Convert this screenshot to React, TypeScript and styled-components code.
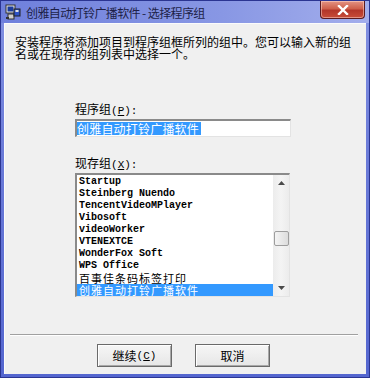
import React from 'react';
import styled, { createGlobalStyle } from 'styled-components';

const GlobalStyle = createGlobalStyle`
  html, body {
    margin: 0;
    padding: 0;
    background: #f0f0f0;
  }
  * { box-sizing: border-box; }
`;

const cjk = `"Noto Sans CJK SC", "DejaVu Sans", sans-serif`;

const Window = styled.div`
  width: 370px;
  height: 378px;
  display: flex;
  flex-direction: column;
  background: linear-gradient(to bottom, #8392e2 0%, #6b7bd8 40%, #5466cf 100%);
  border: 1px solid #2b3592;
  padding: 0 3px 3px 3px;
  font-family: ${cjk};
`;

const TitleBar = styled.div`
  height: 22px;
  display: flex;
  align-items: center;
  gap: 5px;
  margin: 0 -3px;
  padding: 0 4px;
  background: linear-gradient(to right, #6f80dc 0%, #8897e4 60%, #a3aeec 100%);
`;

const TitleText = styled.span`
  font-size: 12px;
  color: #1d1f48;
  flex: 1;
  letter-spacing: -0.6px;
`;

const CloseButton = styled.div`
  width: 45px;
  height: 18px;
  margin-top: -4px;
  border: 1px solid #5b1a20;
  border-top: none;
  border-radius: 0 0 4px 4px;
  background: linear-gradient(to bottom, #e39484 0%, #cf604b 45%, #b3362a 55%, #c84c39 100%);
  display: flex;
  align-items: center;
  justify-content: center;
  box-shadow: inset 0 0 0 1px rgba(255, 220, 210, 0.5);
`;

const Client = styled.div`
  flex: 1;
  background: #f0f0f0;
  border-top: 1px solid #fbfbfb;
  border-left: 1px solid #fbfbfb;
  display: flex;
  flex-direction: column;
`;

const Intro = styled.div`
  padding: 12px 0 0 10px;
  width: 350px;
  font-size: 12px;
  line-height: 12px;
  color: #000;
`;

const Group = styled.div`
  padding-left: 70px;
  display: flex;
  flex-direction: column;
`;

const Label = styled.div<{ $top: number }>`
  margin-top: ${p => p.$top}px;
  height: 12px;
  display: flex;
  align-items: baseline;
  font-size: 12px;
  line-height: 12px;
  color: #000;
  u { text-decoration: underline; }
`;

const Latin = styled.span`
  font-family: "Liberation Mono", monospace;
  font-size: 11px;
  line-height: 12px;
`;

const TextInput = styled.div`
  margin-top: 4px;
  width: 216px;
  height: 18px;
  background: #fff;
  border-top: 2px solid #8a8a8a;
  border-left: 2px solid #8a8a8a;
  border-right: 1px solid #e3e3e3;
  border-bottom: 1px solid #e3e3e3;
  padding: 1px 0 0 0;
  display: flex;
`;

const Selected = styled.span`
  background: #3399ff;
  color: #fff;
  font-size: 12px;
  line-height: 13px;
  height: 13px;
  padding-right: 2px;
  letter-spacing: 0.2px;
`;

const ListBox = styled.div`
  margin-top: 4px;
  width: 215px;
  height: 124px;
  background: #fff;
  border-top: 2px solid #8a8a8a;
  border-left: 2px solid #8a8a8a;
  border-right: 1px solid #e3e3e3;
  border-bottom: 1px solid #e3e3e3;
  display: flex;
`;

const Items = styled.div`
  flex: 1;
  display: flex;
  flex-direction: column;
  padding-top: 1px;
`;

const Item = styled.div<{ $sel?: boolean; $cjk?: boolean }>`
  height: 12px;
  line-height: 12px;
  padding-left: 2px;
  white-space: nowrap;
  font-family: ${p => (p.$cjk ? cjk : `"Liberation Mono", monospace`)};
  font-size: ${p => (p.$cjk ? 11 : 10)}px;
  letter-spacing: ${p => (p.$cjk ? 1 : 0)}px;
  font-weight: ${p => (p.$cjk ? 400 : 700)};
  color: ${p => (p.$sel ? '#fff' : '#000')};
  background: ${p => (p.$sel ? '#3399ff' : 'transparent')};
`;

const ScrollBar = styled.div`
  width: 16px;
  background: linear-gradient(to right, #ececec, #f4f4f4, #ececec);
  display: flex;
  flex-direction: column;
  align-items: center;
`;

const Arrow = styled.div`
  height: 16px;
  width: 16px;
  display: flex;
  align-items: center;
  justify-content: center;
`;

const Track = styled.div`
  flex: 1;
  width: 100%;
  padding-top: 40px;
`;

const Thumb = styled.div`
  height: 15px;
  width: 15px;
  margin-left: 1px;
  border: 1px solid #9d9d9d;
  border-radius: 2px;
  background: linear-gradient(to right, #f4f4f4, #dcdcdc);
`;

const Separator = styled.div`
  margin: 37px 8px 0 5px;
  height: 2px;
  border-top: 1px solid #a0a0a0;
  border-bottom: 1px solid #ffffff;
`;

const Footer = styled.div`
  display: flex;
  gap: 23px;
  padding: 8px 0 0 92px;
`;

const Button = styled.div`
  width: 75px;
  height: 23px;
  border: 1px solid #6a6a6a;
  background: linear-gradient(to bottom, #f6f6f6, #e6e6e6);
  box-shadow: inset 1px 1px 0 #ffffff, inset -1px -1px 0 #a8a8a8;
  display: flex;
  align-items: center;
  justify-content: center;
  font-size: 12px;
  line-height: 12px;
  color: #000;
`;

function SetupIcon() {
  return (
    <svg width="16" height="16" viewBox="0 0 16 16">
      <rect x="1" y="1" width="9" height="8" fill="#e8e8e8" stroke="#303030" strokeWidth="1" />
      <rect x="2.5" y="2.5" width="6" height="5" fill="#1c3c9c" />
      <rect x="3" y="10" width="6" height="5" fill="#d0d0d0" stroke="#303030" strokeWidth="1" />
      <rect x="9" y="5" width="6" height="7" fill="#2c52c8" stroke="#202020" strokeWidth="1" />
      <rect x="10.5" y="6" width="3" height="2" fill="#e0e0e0" />
      <rect x="1" y="13" width="3" height="2" fill="#303030" />
    </svg>
  );
}

function CloseGlyph() {
  return (
    <svg width="12" height="10" viewBox="0 0 12 10">
      <path d="M2 1 L10 9 M10 1 L2 9" stroke="#ffffff" strokeWidth="2.4" strokeLinecap="square" />
    </svg>
  );
}

function Tri({ up }: { up?: boolean }) {
  return (
    <svg width="7" height="4" viewBox="0 0 7 4">
      <path d={up ? 'M0 4 L3.5 0 L7 4 Z' : 'M0 0 L3.5 4 L7 0 Z'} fill="#4a4a4a" />
    </svg>
  );
}

const groups = [
  'Startup',
  'Steinberg Nuendo',
  'TencentVideoMPlayer',
  'Vibosoft',
  'videoWorker',
  'VTENEXTCE',
  'WonderFox Soft',
  'WPS Office',
];

export default function App() {
  return (
    <>
      <GlobalStyle />
      <Window>
        <TitleBar>
          <SetupIcon />
          <TitleText>创雅自动打铃广播软件 - 选择程序组</TitleText>
          <CloseButton>
            <CloseGlyph />
          </CloseButton>
        </TitleBar>
        <Client>
          <Intro>安装程序将添加项目到程序组框所列的组中。您可以输入新的组名或在现存的组列表中选择一个。</Intro>
          <Group>
            <Label $top={43}>
              程序组<Latin>(<u>P</u>):</Latin>
            </Label>
            <TextInput>
              <Selected>创雅自动打铃广播软件</Selected>
            </TextInput>
            <Label $top={20}>
              现存组<Latin>(<u>X</u>):</Latin>
            </Label>
            <ListBox>
              <Items>
                {groups.map(g => (
                  <Item key={g}>{g}</Item>
                ))}
                <Item $cjk>百事佳条码标签打印</Item>
                <Item $cjk $sel>创雅自动打铃广播软件</Item>
              </Items>
              <ScrollBar>
                <Arrow>
                  <Tri up />
                </Arrow>
                <Track>
                  <Thumb />
                </Track>
                <Arrow>
                  <Tri />
                </Arrow>
              </ScrollBar>
            </ListBox>
          </Group>
          <Separator />
          <Footer>
            <Button>继续 <Latin>(<u>C</u>)</Latin></Button>
            <Button>取消</Button>
          </Footer>
        </Client>
      </Window>
    </>
  );
}
